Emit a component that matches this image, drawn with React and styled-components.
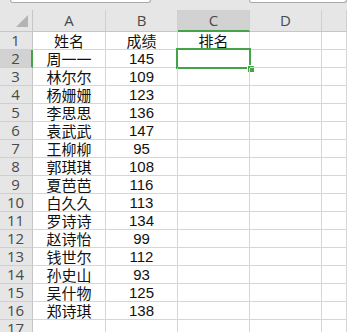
import React from 'react';
import styled, { createGlobalStyle } from 'styled-components';

const GlobalStyle = createGlobalStyle`
    html, body {
        margin: 0;
        padding: 0;
        background: #ffffff;
        overflow: hidden;
    }
`;

const GREEN = '#45a347';
const LINE = '#d6d6d6';

const Page = styled.div`
    width: 347px;
    height: 332px;
    overflow: hidden;
    display: flex;
    flex-direction: column;
    font-family: "Noto Sans CJK SC", "Liberation Sans", sans-serif;
`;

const TopBar = styled.div`
    height: 10px;
    flex: none;
    background: #e6e6e6;
    display: flex;
    align-items: flex-start;
`;

const Field = styled.div`
    height: 2px;
    margin-left: ${p => p.left}px;
    width: ${p => p.width}px;
    background: #ffffff;
    border: 1px solid #a9a9a9;
    border-top: none;
    border-radius: 0 0 4px 4px;
`;

const Sheet = styled.div`
    display: grid;
    grid-template-columns: 33px 73px 72px 72px 72px 1fr;
    grid-template-rows: 22px;
    grid-auto-rows: 18px;
`;

const Corner = styled.div`
    position: relative;
    background: #e6e6e6;
    border-right: 1px solid #c6c6c6;
    border-bottom: 1px solid #c6c6c6;
    box-sizing: border-box;

    &::after {
        content: '';
        position: absolute;
        right: 4px;
        bottom: 4px;
        width: 0;
        height: 0;
        border-left: 12px solid transparent;
        border-bottom: 12px solid #b4b4b4;
    }
`;

const ColHead = styled.div`
    box-sizing: border-box;
    background: ${p => (p.active ? '#d2d2d2' : '#e6e6e6')};
    border-right: 1px solid #cfcfcf;
    border-bottom: ${p => (p.active ? `2px solid ${GREEN}` : '1px solid #c6c6c6')};
    display: flex;
    align-items: center;
    justify-content: center;
    padding-top: ${p => (p.active ? 1 : 0)}px;
    font-family: "Open Sans", "Liberation Sans", sans-serif;
    font-size: 15px;
    line-height: 17px;
    color: #4a4a4a;
`;

const RowHead = styled.div`
    box-sizing: border-box;
    background: ${p => (p.active ? '#d2d2d2' : '#e6e6e6')};
    border-right: ${p => (p.active ? `2px solid ${GREEN}` : '1px solid #c6c6c6')};
    border-bottom: 1px solid #cfcfcf;
    display: flex;
    align-items: center;
    justify-content: center;
    padding-right: ${p => (p.active ? 0 : 1)}px;
    font-family: "Open Sans", "Liberation Sans", sans-serif;
    font-size: 15px;
    line-height: 17px;
    color: #4a4a4a;
`;

const Cell = styled.div`
    position: relative;
    box-sizing: border-box;
    border-right: 1px solid ${LINE};
    border-bottom: 1px solid ${LINE};
    display: flex;
    align-items: center;
    justify-content: center;
    font-size: 15px;
    line-height: 16px;
    color: #111111;
    font-family: ${p => (p.num
        ? '"Liberation Sans", sans-serif'
        : '"Noto Sans CJK SC", sans-serif')};
    padding-top: 1px;
`;

const Selection = styled.div`
    position: absolute;
    left: -2px;
    top: -2px;
    right: -2px;
    bottom: -2px;
    border: 2px solid ${GREEN};
    pointer-events: none;

    &::after {
        content: '';
        position: absolute;
        right: -5px;
        bottom: -5px;
        width: 6px;
        height: 6px;
        background: ${GREEN};
        border-left: 1px solid #ffffff;
        border-top: 1px solid #ffffff;
    }
`;

const columns = ['A', 'B', 'C', 'D', ''];

const rows = [
    ['姓名', '成绩', '排名'],
    ['周一一', '145', ''],
    ['林尔尔', '109', ''],
    ['杨姗姗', '123', ''],
    ['李思思', '136', ''],
    ['袁武武', '147', ''],
    ['王柳柳', '95', ''],
    ['郭琪琪', '108', ''],
    ['夏芭芭', '116', ''],
    ['白久久', '113', ''],
    ['罗诗诗', '134', ''],
    ['赵诗怡', '99', ''],
    ['钱世尔', '112', ''],
    ['孙史山', '93', ''],
    ['吴什物', '125', ''],
    ['郑诗琪', '138', ''],
    ['', '', ''],
];

const App = () => {
    return (
        <Page>
            <GlobalStyle />
            <TopBar>
                <Field left={10} width={144} />
                <Field left={98} width={100} />
            </TopBar>
            <Sheet>
                <Corner />
                {columns.map((c, i) => (
                    <ColHead key={i} active={c === 'C'}>{c}</ColHead>
                ))}
                {rows.map((r, ri) => (
                    <React.Fragment key={ri}>
                        <RowHead active={ri === 1}>{ri + 1}</RowHead>
                        <Cell>{r[0]}</Cell>
                        <Cell num={ri > 0}>{r[1]}</Cell>
                        <Cell>
                            {r[2]}
                            {ri === 1 && <Selection />}
                        </Cell>
                        <Cell />
                        <Cell />
                    </React.Fragment>
                ))}
            </Sheet>
        </Page>
    );
};

export default App;
